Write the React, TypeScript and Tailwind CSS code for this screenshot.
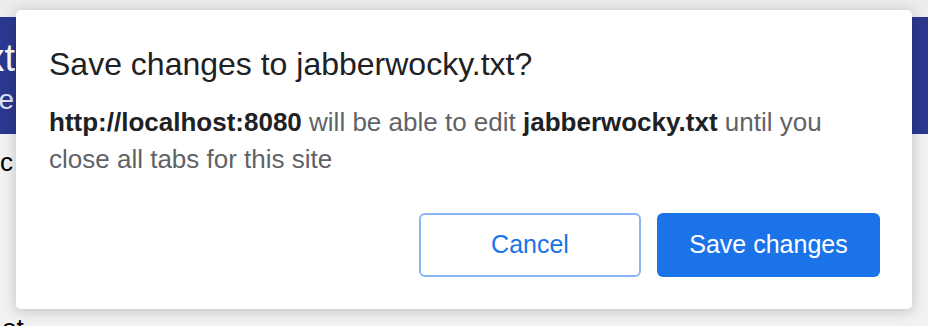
const sans = { fontFamily: '"Liberation Sans", Arial, sans-serif' };

function BackgroundPage() {
  return (
    <div className="flex h-full flex-col" style={sans}>
      <div className="h-[17px] bg-[#ececec]" />
      <header className="flex h-[117px] flex-col bg-[#2b3890] pt-[19px]">
        <div className="flex w-[15px] justify-end overflow-hidden">
          <span className="whitespace-nowrap text-[38px] leading-[44px] text-white">xt</span>
        </div>
        <div className="flex w-[14px] justify-end overflow-hidden">
          <span className="whitespace-nowrap text-[28px] leading-[40px] text-[#dfe3f5]">ie</span>
        </div>
      </header>
      <main className="flex flex-1 flex-col bg-[#f2f2f2]">
        <div className="flex w-[13px] justify-end overflow-hidden pt-[13px]">
          <span className="whitespace-nowrap text-[26px] leading-[30px] text-black">c</span>
        </div>
        <div className="mt-auto flex w-[40px] overflow-hidden pl-[2px]">
          <span className="translate-y-[12px] whitespace-nowrap text-[26px] leading-[20px] text-black">ot</span>
        </div>
      </main>
    </div>
  );
}

function SaveDialog() {
  return (
    <div
      className="absolute left-[16px] top-[10px] flex h-[299px] w-[896px] flex-col rounded-[5px] bg-white pl-[33px] pr-[32px] pt-[36px] shadow-[0_2px_14px_rgba(0,0,0,0.22)]"
      style={sans}
    >
      <h2 className="text-[32px] leading-[36px] text-[#202124]">Save changes to jabberwocky.txt?</h2>
      <p className="mt-[22px] text-[26px] leading-[37px] text-[#5f6368]">
        <b className="font-bold text-[#202124]">http://localhost:8080</b> will be able to edit{" "}
        <b className="font-bold text-[#202124]">jabberwocky.txt</b> until you close all tabs for this site
      </p>
      <div className="mt-auto mb-[32px] flex justify-end gap-[16px]">
        <button className="h-[64px] w-[222px] rounded-[6px] border-2 border-[#8ab4f8] bg-white text-[25px] text-[#1a73e8]">
          Cancel
        </button>
        <button className="h-[64px] w-[223px] rounded-[6px] bg-[#1a73e8] text-[25px] text-white">
          Save changes
        </button>
      </div>
    </div>
  );
}

export default function App() {
  return (
    <div className="relative h-[326px] w-[928px] overflow-hidden bg-[#f2f2f2]">
      <BackgroundPage />
      <SaveDialog />
    </div>
  );
}
